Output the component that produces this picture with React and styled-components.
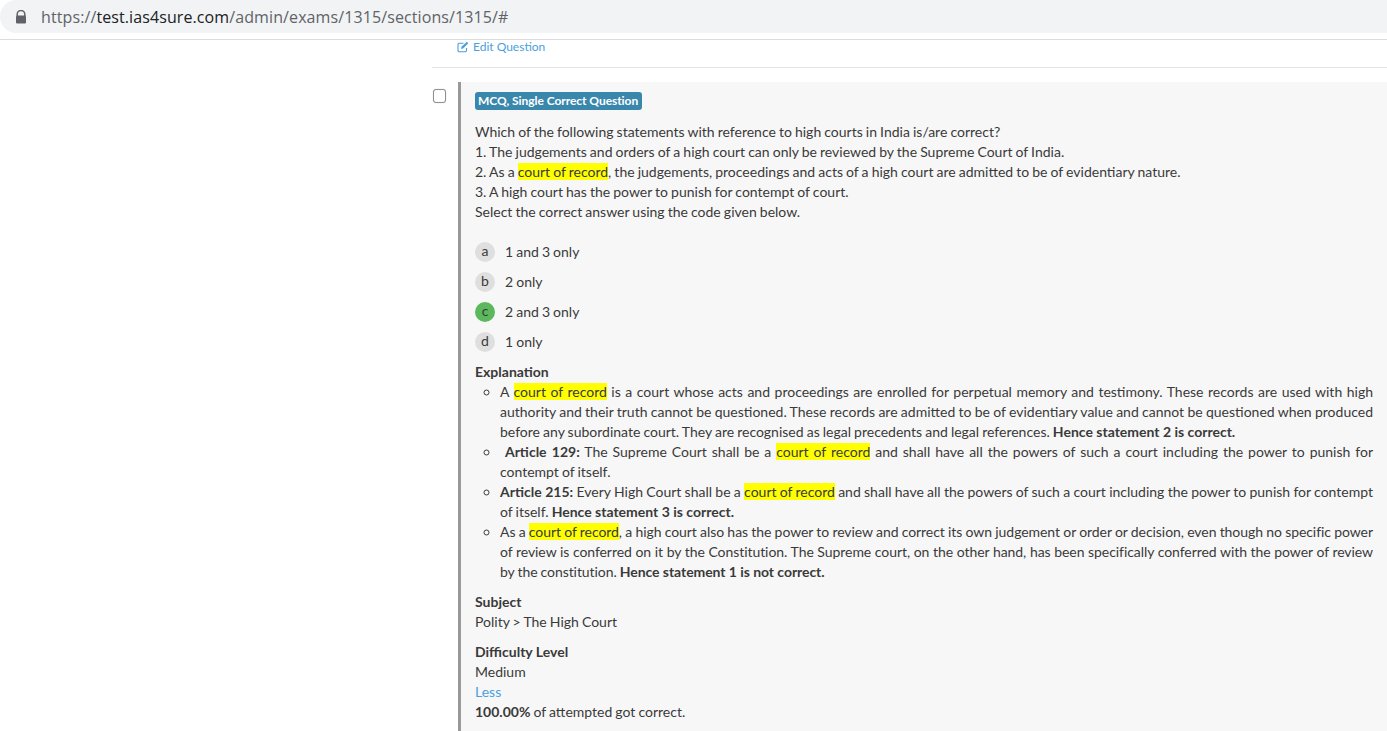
import styled, { createGlobalStyle } from "styled-components"

const GlobalStyle = createGlobalStyle`
html, body {
  margin: 0;
  padding: 0;
  background: #fff;
}
body {
  height: 731px;
  overflow: hidden;
  font-family: Lato, "Liberation Sans", sans-serif;
  font-size: 14px;
  line-height: 20px;
  word-spacing: -0.5px;
  color: #3a3a3a;
}
strong {
  word-spacing: 0;
}
`

const BrowserBar = styled.div`
height: 39px;
border-bottom: 1px solid #dadce0;
`
const AddressBar = styled.div`
height: 33px;
background: #f1f3f4;
border-radius: 17px 0 0 17px;
display: flex;
align-items: center;
padding-left: 15px;
gap: 14px;
`
const Url = styled.div`
font-family: "Open Sans", sans-serif;
font-size: 16px;
letter-spacing: 0.1px;
color: #5f6368;
b {
  font-weight: 400;
  color: #202124;
}
`
const Main = styled.div`
margin-left: 432px;
`
const EditRow = styled.div`
height: 27px;
padding-left: 25px;
border-bottom: 1px solid #e4e4e4;
display: flex;
align-items: flex-start;
gap: 4px;
font-size: 12px;
line-height: 14px;
word-spacing: 0;
color: #4a9fe0;
`
const EditIconWrap = styled.span`
display: flex;
height: 14px;
align-items: center;
`
const QuestionRow = styled.div`
display: flex;
margin-top: 14px;
`
const CheckCol = styled.div`
width: 26px;
flex-shrink: 0;
`
const CheckBox = styled.div`
width: 11px;
height: 12px;
margin: 7px 0 0 1px;
border: 1px solid #8f8f8f;
border-radius: 3px;
background: #fff;
box-shadow: 0 0 1px #bbb;
`
const Card = styled.div`
flex: 1;
height: 649px;
background: #f7f7f7;
border-left: 3px solid #999;
padding: 10px 14px 0 14px;
`
const Badge = styled.span`
display: inline-block;
height: 18px;
line-height: 18px;
padding: 0 4px 0 3px;
margin-bottom: 12px;
background: #3a87ad;
border-radius: 3px;
color: #fff;
font-size: 12px;
font-weight: 700;
word-spacing: 0;
letter-spacing: -0.05px;
vertical-align: top;
`
const Line = styled.div``
const Mark = styled.span`
background: #ffff00;
`
const Options = styled.div`
margin-top: 20px;
display: flex;
flex-direction: column;
gap: 10px;
`
const OptionRow = styled.div`
display: flex;
align-items: center;
gap: 10px;
`
const OptionKey = styled.span`
width: 20px;
height: 20px;
border-radius: 50%;
background: ${(p) => (p.$correct ? "#5cb85c" : "#dfdfdf")};
text-align: center;
line-height: 18px;
font-size: 14px;
`
const Heading = styled.div`
font-weight: 700;
word-spacing: 0;
`
const ExplainBlock = styled.div`
margin-top: 10px;
`
const Bullets = styled.ul`
margin: 0;
padding: 0 0 0 25px;
list-style: circle;
`
const Bullet = styled.li`
text-align: justify;
letter-spacing: ${(p) => (p.$tight ? "-0.06px" : "0")};
`
const Meta = styled.div`
margin-top: 10px;
`
const LessLink = styled.a`
display: block;
color: #4a9fe0;
`

const EditIcon = () => (
    <svg width="12" height="12" viewBox="0 0 12 12" fill="none" stroke="#4a9fe0" strokeWidth="1.1">
        <path d="M9.5 7v2.5a1.3 1.3 0 0 1-1.3 1.3H2.3A1.3 1.3 0 0 1 1 9.500V3.600a1.300 1.300 0 0 1 1.300-1.300H6.500" />
        <path d="M4.500 5.800 9.800 .8l1.500 1.500-5.200 5.200-1.900.4z" fill="#4a9fe0" stroke="none" />
    </svg>
)

const LockIcon = () => (
    <svg width="12" height="14" viewBox="0 0 12 14">
        <path d="M2.200 6V4.300a3.800 3.800 0 0 1 7.600 0V6" fill="none" stroke="#5f6368" strokeWidth="1.500" />
        <rect x="1" y="5.500" width="10" height="8" rx="1.200" fill="#5f6368" />
    </svg>
)

const options = [
    { key: "a", text: "1 and 3 only" },
    { key: "b", text: "2 only" },
    { key: "c", text: "2 and 3 only", correct: true },
    { key: "d", text: "1 only" },
]

const App = () => {
    return (
        <>
            <GlobalStyle />
            <BrowserBar>
                <AddressBar>
                    <LockIcon />
                    <Url>https://<b>test.ias4sure.com</b>/admin/exams/1315/sections/1315/#</Url>
                </AddressBar>
            </BrowserBar>
            <Main>
                <EditRow><EditIconWrap><EditIcon /></EditIconWrap>Edit Question</EditRow>
                <QuestionRow>
                    <CheckCol><CheckBox /></CheckCol>
                    <Card>
                        <Badge>MCQ, Single Correct Question</Badge>
                        <Line>Which of the following statements with reference to high courts in India is/are correct?</Line>
                        <Line>1. The judgements and orders of a high court can only be reviewed by the Supreme Court of India.</Line>
                        <Line>2. As a <Mark>court of record</Mark>, the judgements, proceedings and acts of a high court are admitted to be of evidentiary nature.</Line>
                        <Line>3. A high court has the power to punish for contempt of court.</Line>
                        <Line>Select the correct answer using the code given below.</Line>
                        <Options>
                            {options.map((option) => (
                                <OptionRow key={option.key}>
                                    <OptionKey $correct={option.correct}>{option.key}</OptionKey>
                                    {option.text}
                                </OptionRow>
                            ))}
                        </Options>
                        <ExplainBlock>
                            <Heading>Explanation</Heading>
                            <Bullets>
                                <Bullet>A <Mark>court of record</Mark> is a court whose acts and proceedings are enrolled for perpetual memory and testimony. These records are used with high authority and their truth cannot be questioned. These records are admitted to be of evidentiary value and cannot be questioned when produced before any subordinate court. They are recognised as legal precedents and legal references. <strong>Hence statement 2 is correct.</strong></Bullet>
                                <Bullet>&nbsp;<strong>Article 129:</strong> The Supreme Court shall be a <Mark>court of record</Mark> and shall have all the powers of such a court including the power to punish for contempt of itself.</Bullet>
                                <Bullet><strong>Article 215:</strong> Every High Court shall be a <Mark>court of record</Mark> and shall have all the powers of such a court including the power to punish for contempt of itself. <strong>Hence statement 3 is correct.</strong></Bullet>
                                <Bullet $tight>As a <Mark>court of record</Mark>, a high court also has the power to review and correct its own judgement or order or decision, even though no specific power of review is conferred on it by the Constitution. The Supreme court, on the other hand, has been specifically conferred with the power of review by the constitution. <strong>Hence statement 1 is not correct.</strong></Bullet>
                            </Bullets>
                        </ExplainBlock>
                        <Meta>
                            <Heading>Subject</Heading>
                            Polity &gt; The High Court
                        </Meta>
                        <Meta>
                            <Heading>Difficulty Level</Heading>
                            Medium
                            <LessLink>Less</LessLink>
                            <strong>100.00%</strong> of attempted got correct.
                        </Meta>
                    </Card>
                </QuestionRow>
            </Main>
        </>
    )
}

export default App
